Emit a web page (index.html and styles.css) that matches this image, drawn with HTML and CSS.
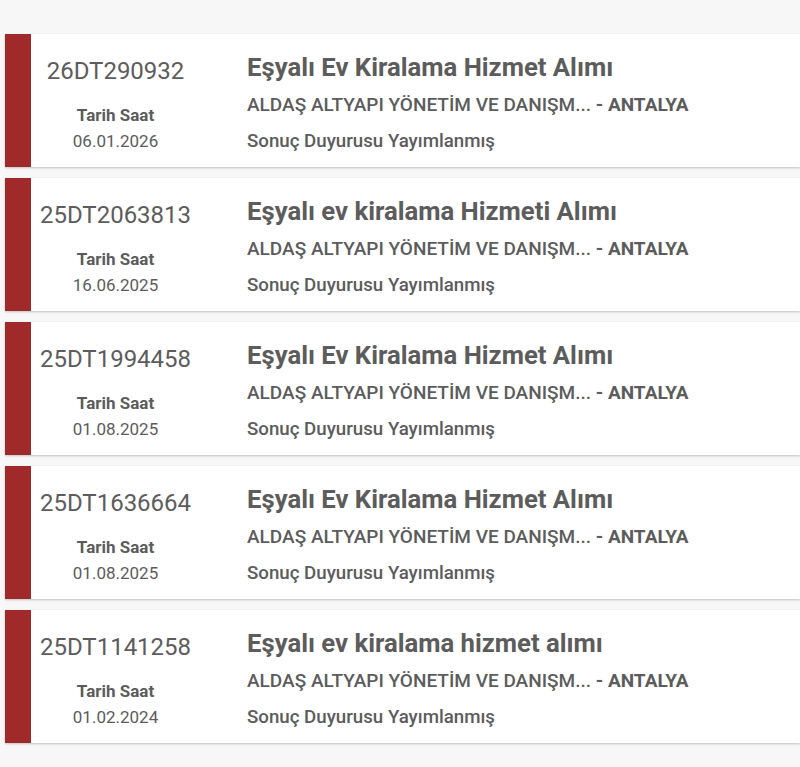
FILE: index.html
```html
<!DOCTYPE html>
<html lang="tr">
<head>
<meta charset="utf-8">
<title>İhaleler</title>
<link rel="stylesheet" href="styles.css">
</head>
<body>
<div class="list">
  <div class="card">
    <div class="meta">
      <div class="ikn">26DT290932</div>
      <div class="label">Tarih Saat</div>
      <div class="date">06.01.2026</div>
    </div>
    <div class="info">
      <div class="title">Eşyalı Ev Kiralama Hizmet Alımı</div>
      <div class="org">ALDAŞ ALTYAPI YÖNETİM VE DANIŞM... <span class="city">- ANTALYA</span></div>
      <div class="status">Sonuç Duyurusu Yayımlanmış</div>
    </div>
  </div>
  <div class="card">
    <div class="meta">
      <div class="ikn">25DT2063813</div>
      <div class="label">Tarih Saat</div>
      <div class="date">16.06.2025</div>
    </div>
    <div class="info">
      <div class="title">Eşyalı ev kiralama Hizmeti Alımı</div>
      <div class="org">ALDAŞ ALTYAPI YÖNETİM VE DANIŞM... <span class="city">- ANTALYA</span></div>
      <div class="status">Sonuç Duyurusu Yayımlanmış</div>
    </div>
  </div>
  <div class="card">
    <div class="meta">
      <div class="ikn">25DT1994458</div>
      <div class="label">Tarih Saat</div>
      <div class="date">01.08.2025</div>
    </div>
    <div class="info">
      <div class="title">Eşyalı Ev Kiralama Hizmet Alımı</div>
      <div class="org">ALDAŞ ALTYAPI YÖNETİM VE DANIŞM... <span class="city">- ANTALYA</span></div>
      <div class="status">Sonuç Duyurusu Yayımlanmış</div>
    </div>
  </div>
  <div class="card">
    <div class="meta">
      <div class="ikn">25DT1636664</div>
      <div class="label">Tarih Saat</div>
      <div class="date">01.08.2025</div>
    </div>
    <div class="info">
      <div class="title">Eşyalı Ev Kiralama Hizmet Alımı</div>
      <div class="org">ALDAŞ ALTYAPI YÖNETİM VE DANIŞM... <span class="city">- ANTALYA</span></div>
      <div class="status">Sonuç Duyurusu Yayımlanmış</div>
    </div>
  </div>
  <div class="card">
    <div class="meta">
      <div class="ikn">25DT1141258</div>
      <div class="label">Tarih Saat</div>
      <div class="date">01.02.2024</div>
    </div>
    <div class="info">
      <div class="title">Eşyalı ev kiralama hizmet alımı</div>
      <div class="org">ALDAŞ ALTYAPI YÖNETİM VE DANIŞM... <span class="city">- ANTALYA</span></div>
      <div class="status">Sonuç Duyurusu Yayımlanmış</div>
    </div>
  </div>
</div>
</body>
</html>
```
FILE: styles.css
```css
html, body {
  margin: 0;
  padding: 0;
}
body {
  background: #f7f7f7;
  font-family: Roboto, "Noto Sans", "Liberation Sans", sans-serif;
  color: #5c5c5c;
  width: 800px;
  height: 767px;
  overflow: hidden;
}
.list {
  display: flex;
  flex-direction: column;
  gap: 11px;
  padding: 34px 0 0 5px;
}
.card {
  display: flex;
  height: 133px;
  background: #ffffff;
  border-left: 26px solid #a0292a;
  box-shadow: 0 1px 2px rgba(0, 0, 0, 0.22);
}
.meta {
  width: 169px;
  flex: none;
  text-align: center;
  padding-top: 23px;
  box-sizing: border-box;
}
.ikn {
  font-size: 24px;
  line-height: 28px;
  font-weight: 400;
}
.label {
  margin-top: 17px;
  font-size: 17px;
  line-height: 26px;
  font-weight: 700;
}
.date {
  font-size: 17px;
  line-height: 26px;
  font-weight: 400;
}
.info {
  padding: 18px 0 0 47px;
  white-space: nowrap;
}
.title {
  font-size: 25.7px;
  line-height: 30px;
  font-weight: 700;
}
.org {
  margin-top: 5px;
  font-size: 19px;
  line-height: 36px;
  font-weight: 500;
}
.city {
  font-weight: 700;
}
.status {
  font-size: 18.7px;
  line-height: 36px;
  font-weight: 500;
}
```
